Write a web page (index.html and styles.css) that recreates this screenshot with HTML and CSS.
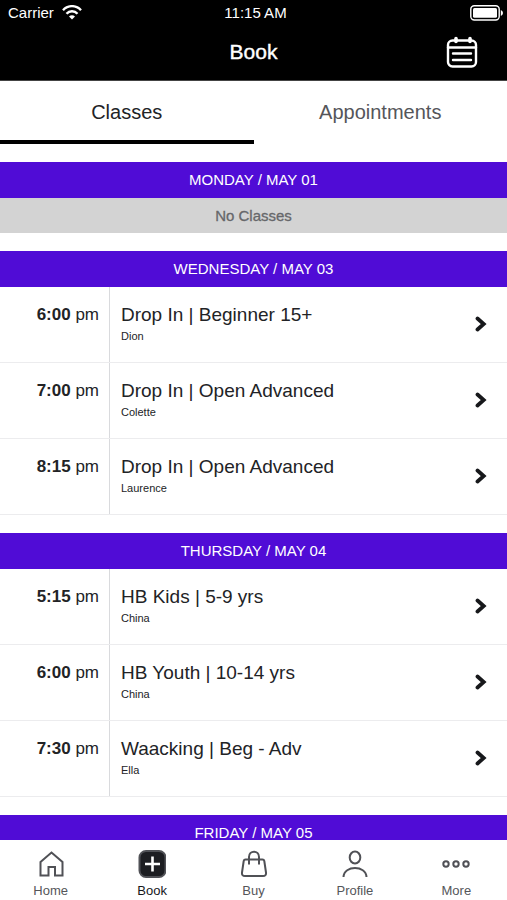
FILE: index.html
```
<!DOCTYPE html>
<html lang="en">
<head>
<meta charset="utf-8">
<meta name="viewport" content="width=device-width, initial-scale=1">
<title>Book</title>
<link rel="stylesheet" href="styles.css">
</head>
<body>
<svg class="sprite" aria-hidden="true">
  <symbol id="chevron" viewBox="0 0 12 18"><path d="M2.5 2.5 L8.7 8 L2.5 13.5" fill="none" stroke="currentColor" stroke-width="3.8" stroke-linecap="round"/></symbol>
</svg>
<div class="app">
  <header class="top">
    <div class="status">
      <span class="carrier">Carrier
        <svg width="20" height="15" viewBox="0 0 20 15" aria-hidden="true"><path d="M1 5.2 C6 -0.2 14 -0.2 19 5.2 M4.5 8.8 C7.5 5.4 12.5 5.4 15.5 8.8" fill="none" stroke="#fff" stroke-width="2.4"/><path d="M7 11.6 C8.8 9.9 11.2 9.9 13 11.6 L10 14.6 Z" fill="#fff"/></svg>
      </span>
      <span class="clock">11:15 AM</span>
      <svg class="battery" width="33" height="16" viewBox="0 0 33 16" aria-hidden="true"><rect x=".8" y=".8" width="28.4" height="14.2" rx="3.5" fill="none" stroke="#fff" stroke-width="1.4"/><rect x="3" y="3" width="24" height="9.8" rx="1.5" fill="#fff"/><path d="M30.8 5 Q33 6 33 8 T30.8 11Z" fill="#fff"/></svg>
    </div>
    <div class="titlebar">
      <h1>Book</h1>
      <button class="calendar" aria-label="Calendar">
        <svg width="32" height="32" viewBox="0 0 32 32" fill="none" stroke="#fff" stroke-width="2.4" stroke-linecap="round"><rect x="2" y="4.5" width="28" height="26" rx="4.5"/><path d="M2 11.5H30M7 17.5H25M7 24H25"/><path d="M10 2.5V5.5M24 2.5V5.5" stroke-width="3.6"/></svg>
      </button>
    </div>
  </header>
  <div class="tabs" role="tablist">
    <button class="tab active" role="tab" aria-selected="true">Classes</button>
    <button class="tab" role="tab" aria-selected="false">Appointments</button>
  </div>
  <main class="schedule">
    <section class="day">
      <h2>MONDAY / MAY 01</h2>
      <p class="empty">No Classes</p>
    </section>
    <section class="day">
      <h2>WEDNESDAY / MAY 03</h2>
      <a class="row" href="#"><span class="time"><b>6:00</b> pm</span><span class="info"><span class="name">Drop In | Beginner 15+</span><span class="teacher">Dion</span></span><svg class="chevron"><use href="#chevron"/></svg></a>
      <a class="row" href="#"><span class="time"><b>7:00</b> pm</span><span class="info"><span class="name">Drop In | Open Advanced</span><span class="teacher">Colette</span></span><svg class="chevron"><use href="#chevron"/></svg></a>
      <a class="row" href="#"><span class="time"><b>8:15</b> pm</span><span class="info"><span class="name">Drop In | Open Advanced</span><span class="teacher">Laurence</span></span><svg class="chevron"><use href="#chevron"/></svg></a>
    </section>
    <section class="day">
      <h2>THURSDAY / MAY 04</h2>
      <a class="row" href="#"><span class="time"><b>5:15</b> pm</span><span class="info"><span class="name">HB Kids | 5-9 yrs</span><span class="teacher">China</span></span><svg class="chevron"><use href="#chevron"/></svg></a>
      <a class="row" href="#"><span class="time"><b>6:00</b> pm</span><span class="info"><span class="name">HB Youth | 10-14 yrs</span><span class="teacher">China</span></span><svg class="chevron"><use href="#chevron"/></svg></a>
      <a class="row" href="#"><span class="time"><b>7:30</b> pm</span><span class="info"><span class="name">Waacking | Beg - Adv</span><span class="teacher">Ella</span></span><svg class="chevron"><use href="#chevron"/></svg></a>
    </section>
    <section class="day">
      <h2>FRIDAY / MAY 05</h2>
    </section>
  </main>
  <nav class="nav">
    <a href="#"><svg viewBox="0 0 28 28"><path d="M3.5 12 L14.5 2.5 L25.5 12 V25.5 H18 V17 H11.5 V25.5 H3.5 Z"/></svg>Home</a>
    <a class="active" href="#"><svg viewBox="0 0 28 28"><rect x="1.5" y="1" width="26" height="26" rx="6.5" fill="#1d1e22"/><path d="M14.5 6.5V21.5M7 14H22" stroke="#fff" stroke-width="2.6"/></svg>Book</a>
    <a href="#"><svg viewBox="0 0 28 28"><path d="M5.5 9.5 H22.5 Q24 9.5 24.3 11 L26 22.5 Q26.4 26 23 26 H5 Q1.6 26 2 22.5 L3.7 11 Q4 9.5 5.5 9.5 Z M9 14.5 V7 C9 0 19 0 19 7 V14.5"/></svg>Buy</a>
    <a href="#"><svg viewBox="0 0 28 28"><ellipse cx="14" cy="7.5" rx="5.3" ry="6"/><path d="M2.5 27 C3 15 25 15 25.5 27"/></svg>Profile</a>
    <a href="#"><svg viewBox="0 0 28 28"><circle cx="4" cy="14" r="2.7"/><circle cx="14" cy="14" r="2.7"/><circle cx="24" cy="14" r="2.7"/></svg>More</a>
  </nav>
</div>
</body>
</html>
```
FILE: styles.css
```
* { box-sizing: border-box; }
body {
  margin: 0;
  font-family: "Liberation Sans", Arial, sans-serif;
  color: #222326;
  background: #fff;
}
h1, h2, p { margin: 0; font-weight: 400; }
button { font: inherit; border: 0; background: none; padding: 0; }
a { color: inherit; text-decoration: none; }
.sprite { display: none; }
.app { display: flex; flex-direction: column; height: 100vh; }

.top { background: #000; color: #fff; border-bottom: 1px solid #444; }
.status {
  display: grid;
  grid-template-columns: 1fr auto 1fr;
  align-items: center;
  height: 25px;
  padding: 0 4px 0 8px;
  font-size: 15px;
}
.carrier { display: flex; align-items: center; gap: 8px; }
.battery { justify-self: end; }
.titlebar {
  display: grid;
  grid-template-columns: 1fr auto 1fr;
  align-items: center;
  height: 55px;
  padding: 0 29px 2px;
}
h1 { grid-column: 2; font-size: 21px; -webkit-text-stroke: 0.4px #fff; }
.calendar { justify-self: end; height: 32px; }

.tabs { display: flex; flex-shrink: 0; height: 63px; }
.tab { flex: 1; padding-top: 4px; color: #55565a; font-size: 20px; border-bottom: 4px solid transparent; }
.tab.active { color: #222326; border-color: #000; }

.schedule {
  display: flex;
  flex: 1;
  flex-direction: column;
  gap: 18px;
  min-height: 0;
  padding-top: 18px;
  overflow: hidden;
}
.day { flex-shrink: 0; }
h2 { background: #500cd6; color: #fff; font-size: 15px; line-height: 36px; text-align: center; }
.empty {
  background: #d3d3d3;
  color: #66676a;
  font-size: 15px;
  line-height: 35px;
  text-align: center;
  -webkit-text-stroke: 0.3px #66676a;
}
.row { display: flex; height: 76px; border-bottom: 1px solid #ececee; }
.time {
  width: 110px;
  padding: 16px 10px 0 0;
  border-right: 1px solid #d9dadd;
  font-size: 17px;
  line-height: 24px;
  text-align: right;
}
.info { display: flex; flex: 1; flex-direction: column; padding: 16px 0 0 11px; }
.name { font-size: 19px; line-height: 24px; }
.teacher { font-size: 11px; line-height: 18px; }
.chevron { align-self: center; width: 12px; height: 18px; margin-right: 20px; color: #17181b; }

.nav { display: flex; flex-shrink: 0; height: 60px; padding-top: 10px; background: #fff; }
.nav a {
  display: flex;
  flex: 1;
  flex-direction: column;
  align-items: center;
  gap: 5px;
  color: #55565a;
  font-size: 13px;
  line-height: 16px;
}
.nav a.active { color: #17181b; }
.nav svg { width: 28px; height: 28px; fill: none; stroke: #505156; stroke-width: 2; }
```
